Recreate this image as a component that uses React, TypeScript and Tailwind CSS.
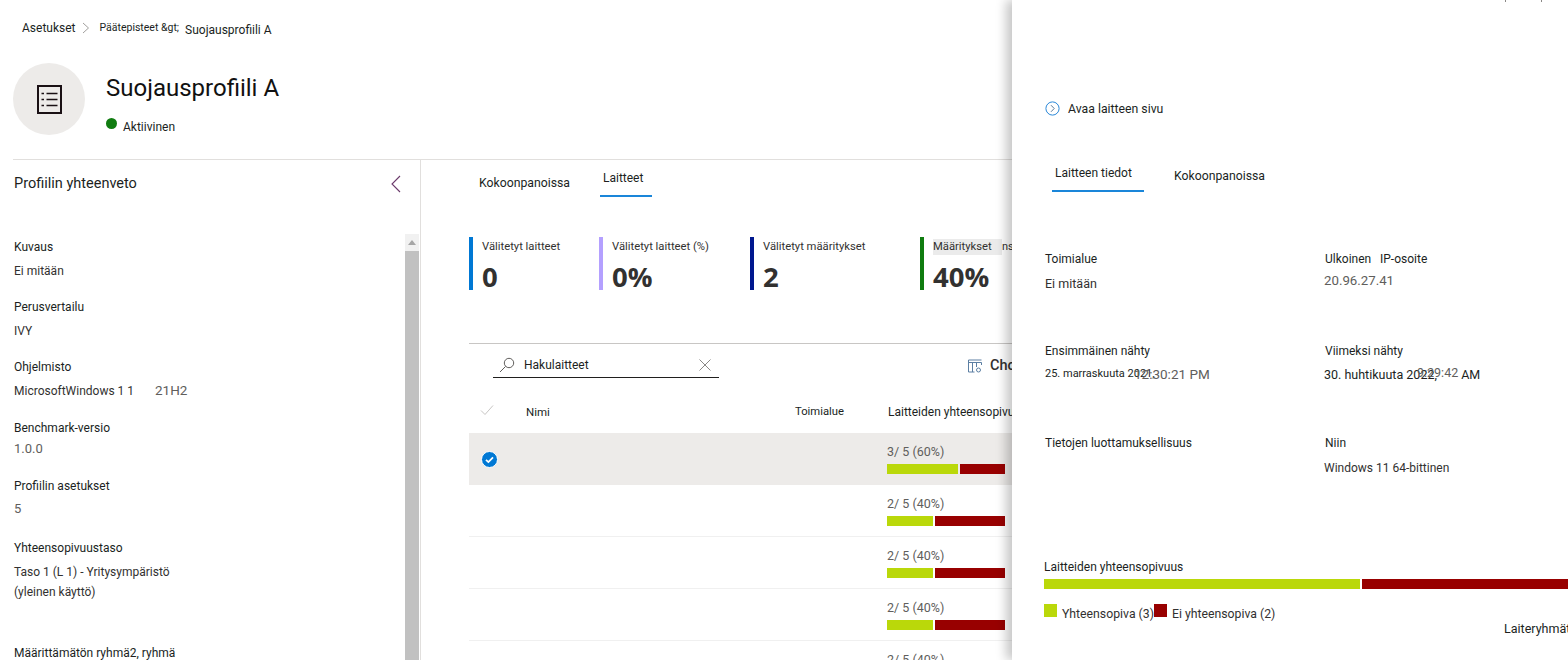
import React from "react";

function ListIcon() {
  return (
    <svg width="25" height="29" viewBox="0 0 25 29" fill="none" stroke="#1a1014" strokeWidth="2">
      <rect x="1" y="1" width="23" height="27" />
      <path d="M9.5 8.5h11M9.5 14.5h11M9.5 20.5h11" strokeWidth="1.7" />
      <path d="M4.5 8.5h2.5M4.5 14.5h2.5M4.5 20.5h2.5" strokeWidth="1.7" />
    </svg>
  );
}

function Field({ label, value, labelCls, valueCls }: { label: string; value: React.ReactNode; labelCls: string; valueCls: string }) {
  return (
    <div>
      <div className={labelCls}>{label}</div>
      <div className={valueCls}>{value}</div>
    </div>
  );
}

function Stat({ w, color, label, value }: { w: string; color: string; label: React.ReactNode; value: string }) {
  return (
    <div className={`flex h-[53px] shrink-0 ${w}`}>
      <div className={`w-[4px] h-full ${color}`} />
      <div className="pl-[9px] pt-[1px]">
        <div className="text-[11.25px] leading-[18px] text-[#323130] whitespace-nowrap">{label}</div>
        <div className="font-['Open_Sans',sans-serif] text-[27.5px] leading-[36px] font-bold text-[#323130] mt-[3px]">{value}</div>
      </div>
    </div>
  );
}

function Row({ text, pass, selected }: { text: string; pass: number; selected?: boolean }) {
  return (
    <div className={`grid grid-cols-[57px_361px_1fr] h-[52px] ${selected ? "bg-[#edebe9]" : "border-b border-[#f0f0f0]"}`}>
      <div className="flex items-center pl-[12px]">
        {selected && (
          <svg width="17" height="17" viewBox="0 0 17 17">
            <circle cx="8.5" cy="8.5" r="8" fill="#0078d4" stroke="#fff" strokeWidth="1" />
            <path d="M5 8.8l2.4 2.3L12 6.4" fill="none" stroke="#fff" strokeWidth="1.8" />
          </svg>
        )}
      </div>
      <div />
      <div className="pt-[11px]">
        <div className="text-[12.5px] leading-[16px] text-[#605e5c]">{text}</div>
        <div className="flex gap-[2px] mt-[4px] h-[10px] w-[118px]">
          <div className={`h-full bg-[#bad80a] ${pass === 3 ? "w-[71px]" : "w-[46px]"}`} />
          <div className="h-full flex-1 bg-[#980000]" />
        </div>
      </div>
    </div>
  );
}

export default function App() {
  const side = "text-[12px] leading-[18px] text-[#201f1e] whitespace-nowrap";
  const sideVal = "text-[12px] leading-[18px] text-[#323130] mt-[6px] whitespace-nowrap";
  const pLabel = "text-[12px] leading-[18px] text-[#201f1e] whitespace-nowrap";
  return (
    <div className="relative w-[1568px] h-[660px] overflow-hidden bg-white font-['Roboto',sans-serif]">
      <div className="h-[159px] pl-[22px] pt-[19px]">
        <div className="flex items-center h-[18px] text-[#201f1e] whitespace-nowrap">
          <span className="text-[12px]">Asetukset</span>
          <svg className="ml-[6px]" width="8" height="12" viewBox="0 0 8 12" fill="none" stroke="#a19f9d">
            <path d="M1 1l5.5 5L1 11" />
          </svg>
          <span className="text-[10.5px] ml-[10px]">Päätepisteet &amp;gt;</span>
          <span className="text-[12px] ml-[6px] mt-[3px]">Suojausprofiili A</span>
        </div>
        <div className="flex -ml-[9px] mt-[26px]">
          <div className="w-[72px] h-[72px] rounded-full bg-[#edebe9] flex items-center justify-center">
            <ListIcon />
          </div>
          <div className="ml-[21px]">
            <div className="text-[24px] leading-[32px] text-[#111] mt-[9px]">Suojausprofiili A</div>
            <div className="flex items-center mt-[9px]">
              <span className="w-[11px] h-[11px] rounded-full bg-[#107c10] -mt-[2px]" />
              <span className="text-[12px] leading-[18px] ml-[6px] mt-[5px] text-[#201f1e]">Aktiivinen</span>
            </div>
          </div>
        </div>
      </div>

      <div className="flex h-[501px] ml-[13px] border-t border-[#e1dfdd]">
        <aside className="w-[408px] shrink-0 border-r border-[#e1dfdd] flex">
          <div className="flex-1 pl-[1px]">
            <div className="flex items-center justify-between h-[48px] pr-[4px]">
              <span className="text-[14.5px] text-[#201f1e] whitespace-nowrap">Profiilin yhteenveto</span>
              <svg width="10" height="18" viewBox="0 0 10 18" fill="none" stroke="#6b3a6b" strokeWidth="1.1">
                <path d="M9 1L1 9l8 8" />
              </svg>
            </div>
            <div className="pt-[30px] flex flex-col">
              <Field label="Kuvaus" value="Ei mitään" labelCls={side} valueCls={sideVal} />
              <div className="h-[18px]" />
              <Field label="Perusvertailu" value="IVY" labelCls={side} valueCls={sideVal} />
              <div className="h-[18px]" />
              <Field
                label="Ohjelmisto"
                value={
                  <span className="flex items-center">
                    <span className="w-[141px] shrink-0">MicrosoftWindows 1 1</span>
                    <span className="-mt-[3px] text-[13.5px] text-[#605e5c]">21H2</span>
                  </span>
                }
                labelCls={side}
                valueCls={sideVal}
              />
              <div className="h-[19px]" />
              <Field label="Benchmark-versio" value="1.0.0" labelCls={side} valueCls="text-[13px] leading-[18px] text-[#605e5c] mt-[3px]" />
              <div className="h-[19px]" />
              <Field label="Profiilin asetukset" value="5" labelCls={side} valueCls="text-[13px] leading-[18px] text-[#605e5c] mt-[5px]" />
              <div className="h-[21px]" />
              <Field
                label="Yhteensopivuustaso"
                value={
                  <>
                    <div>Taso 1 (L 1) - Yritysympäristö</div>
                    <div className="mt-[2px]">(yleinen käyttö)</div>
                  </>
                }
                labelCls={side}
                valueCls={sideVal}
              />
              <div className="h-[43px]" />
              <div className={side}>Määrittämätön ryhmä2, ryhmä</div>
            </div>
          </div>
          <div className="w-[14px] mr-[1px] mt-[74px] bg-[#f1f1f1] flex flex-col">
            <div className="h-[17px] flex items-center justify-center">
              <div className="w-0 h-0 border-x-[4px] border-x-transparent border-b-[5px] border-b-[#a6a6a6]" />
            </div>
            <div className="flex-1 bg-[#c1c1c1]" />
          </div>
        </aside>

        <main className="pl-[48px] flex-1 min-w-0">
          <div className="flex h-[37px] whitespace-nowrap">
            <span className="w-[91px] text-[12.25px] leading-[18px] mt-[14px] ml-[10px] text-[#201f1e]">Kokoonpanoissa</span>
            <div className="ml-[30px] w-[52px] h-[37px] border-b-2 border-[#1a86d9] pt-[9px] text-[12px] leading-[18px] text-[#201f1e]">
              <span className="pl-[3px]">Laitteet</span>
            </div>
          </div>
          <div className="flex mt-[40px]">
            <Stat w="w-[130px]" color="bg-[#0078d4]" label="Välitetyt laitteet" value="0" />
            <Stat w="w-[151px]" color="bg-[#b4a0ff]" label="Välitetyt laitteet (%)" value="0%" />
            <Stat w="w-[170px]" color="bg-[#00188f]" label="Välitetyt määritykset" value="2" />
            <Stat
              w="w-[150px]"
              color="bg-[#107c10]"
              label={
                <span className="flex items-center">
                  <span className="bg-[#ebebeb] w-[69px] h-[16px] leading-[16px]">Määritykset</span>
                  <span className="text-[11px]">ns</span>
                </span>
              }
              value="40%"
            />
          </div>
          <div className="mt-[53px] border-t border-[#c8c6c4] pt-[9px]">
            <div className="flex h-[24px] items-stretch">
              <div className="ml-[24px] w-[226px] h-[25px] border-b border-[#201f1e] flex items-center pl-[6px] pr-[8px]">
                <svg width="16" height="16" viewBox="0 0 16 16" fill="none" stroke="#605e5c">
                  <circle cx="10" cy="6" r="4.7" />
                  <path d="M6.6 9.4L1 15" />
                </svg>
                <span className="text-[12px] ml-[9px] text-[#201f1e] flex-1">Hakulaitteet</span>
                <svg width="12" height="12" viewBox="0 0 12 12" fill="none" stroke="#8a8886">
                  <path d="M.5.5l11 11M11.5.5l-11 11" />
                </svg>
              </div>
              <div className="ml-[249px] flex items-center whitespace-nowrap mt-[2px]">
                <svg width="14" height="14" viewBox="0 0 14 14" fill="none" stroke="#5c7fa3">
                  <path d="M.5 1h13M.5 3.5h13V6M.5 1v12h6M4.5 3.5V13M8.5 3.5V8" />
                  <circle cx="10.5" cy="11" r="2" />
                </svg>
                <span className="ml-[8px] text-[14.5px] font-medium text-[#323130]">Choose columns</span>
              </div>
            </div>
            <div className="grid grid-cols-[57px_269px_93px_1fr] h-[56px] pt-[26px] text-[12px] leading-[18px] text-[#201f1e] whitespace-nowrap">
              <div className="pl-[11px] pt-[1px]">
                <svg width="14" height="12" viewBox="0 0 14 12" fill="none" stroke="#c8c6c4">
                  <path d="M1 6.5L5 10.5 13 1.5" />
                </svg>
              </div>
              <div className="text-[11.5px]">Nimi</div>
              <div className="text-[11.25px]">Toimialue</div>
              <div>Laitteiden yhteensopivuus</div>
            </div>
            <Row text="3/ 5 (60%)" pass={3} selected />
            <Row text="2/ 5 (40%)" pass={2} />
            <Row text="2/ 5 (40%)" pass={2} />
            <Row text="2/ 5 (40%)" pass={2} />
            <Row text="2/ 5 (40%)" pass={2} />
          </div>
        </main>
      </div>

      <div className="absolute top-0 right-0 bottom-0 w-[556px] bg-white shadow-[-6px_0_10px_rgba(0,0,0,0.22)] pl-[33px] overflow-hidden">
        <div className="absolute top-0 left-[493px] w-[1px] h-[2px] bg-[#8a8886]" />
        <div className="absolute top-0 left-[529px] w-[1px] h-[2px] bg-[#8a8886]" />
        <div className="flex items-center mt-[100px] h-[17px]">
          <svg width="15" height="15" viewBox="0 0 15 15" fill="none" stroke="#2b88d8">
            <circle cx="7.5" cy="7.5" r="6.6" />
            <path d="M6 4.2l3.2 3.3L6 10.8" stroke="#5a7a9a" />
          </svg>
          <span className="ml-[8px] mt-[1px] text-[12.25px] text-[#201f1e]">Avaa laitteen sivu</span>
        </div>
        <div className="flex mt-[38px] h-[37px] ml-[7px] whitespace-nowrap">
          <div className="w-[92px] border-b-2 border-[#1a86d9] pl-[3px] pt-[9px] text-[12px] leading-[18px] text-[#201f1e]">Laitteen tiedot</div>
          <div className="ml-[30px] pt-[12px] text-[12.25px] leading-[18px] text-[#201f1e]">Kokoonpanoissa</div>
        </div>
        <div className="grid grid-cols-[280px_1fr] mt-[58px] whitespace-nowrap">
          <div className="h-[92px]">
            <div className={pLabel}>Toimialue</div>
            <div className="text-[12.5px] leading-[18px] text-[#323130] mt-[7px]">Ei mitään</div>
          </div>
          <div className="h-[92px]">
            <div className={`flex ${pLabel}`}>
              <span className="w-[55px]">Ulkoinen</span>
              <span>IP-osoite</span>
            </div>
            <div className="text-[13.25px] leading-[18px] text-[#605e5c] mt-[4px] -ml-[1px]">20.96.27.41</div>
          </div>
          <div className="h-[92px]">
            <div className={pLabel}>Ensimmäinen nähty</div>
            <div className="flex items-center mt-[5px] h-[18px]">
              <span className="text-[11px] text-[#201f1e] w-[89px] shrink-0">25. marraskuuta 2021,</span>
              <span className="text-[13.5px] text-[#605e5c]">12:30:21 PM</span>
            </div>
          </div>
          <div className="h-[92px]">
            <div className={pLabel}>Viimeksi nähty</div>
            <div className="flex items-center mt-[5px] h-[18px] -ml-[1px]">
              <span className="text-[12.5px] text-[#201f1e] mt-[2px] w-[93px] shrink-0">30. huhtikuuta 2022,</span>
              <span className="text-[12.5px] text-[#605e5c] -mt-[2px]">9:29:42</span>
              <span className="text-[12.5px] text-[#201f1e] ml-[3px] mt-[2px]">AM</span>
            </div>
          </div>
          <div className="h-[92px]">
            <div className={pLabel}>Tietojen luottamuksellisuus</div>
          </div>
          <div className="h-[92px]">
            <div className={pLabel}>Niin</div>
            <div className="text-[12px] leading-[18px] text-[#323130] mt-[7px] -ml-[1px]">Windows 11 64-bittinen</div>
          </div>
        </div>
        <div className="mt-[32px] -ml-[1px]">
          <div className="text-[12px] leading-[18px] text-[#201f1e]">Laitteiden yhteensopivuus</div>
          <div className="flex gap-[2px] h-[10px] mt-[3px] w-[524px]">
            <div className="w-[316px] bg-[#bad80a]" />
            <div className="flex-1 bg-[#980000]" />
          </div>
          <div className="flex items-start mt-[15px] whitespace-nowrap">
            <span className="w-[13px] h-[13px] bg-[#bad80a]" />
            <span className="ml-[5px] text-[12.25px] leading-[18px] mt-[1px] text-[#323130] w-[92px]">Yhteensopiva (3)</span>
            <span className="w-[13px] h-[13px] bg-[#980000]" />
            <span className="ml-[5px] text-[12.25px] leading-[18px] mt-[1px] text-[#323130]">Ei yhteensopiva (2)</span>
          </div>
          <div className="pl-[460px] -mt-[3px] text-[12.5px] leading-[18px] text-[#201f1e] whitespace-nowrap">Laiteryhmät</div>
        </div>
      </div>
    </div>
  );
}
